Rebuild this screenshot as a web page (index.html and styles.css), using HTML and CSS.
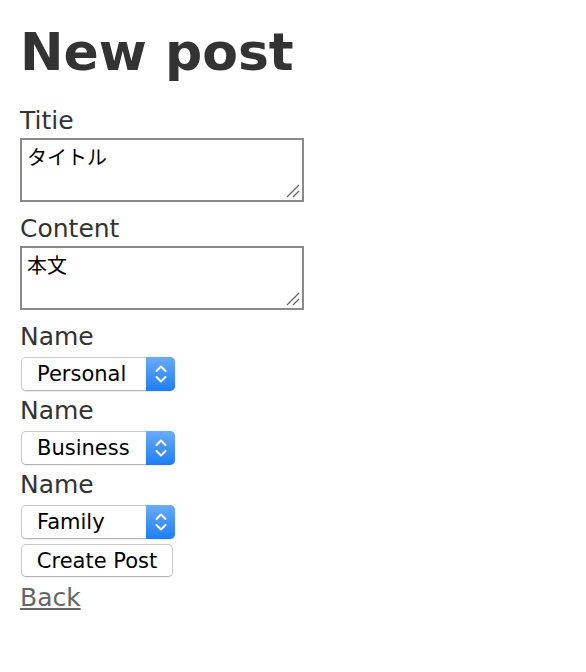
FILE: index.html
```html
<!DOCTYPE html>
<html>
<head>
  <meta charset="UTF-8">
  <title>New post</title>
  <link rel="stylesheet" href="styles.css">
</head>
<body>
  <h1>New post</h1>

  <form class="post-form">
    <div class="field">
      <label for="post_title">Titie</label>
      <span class="text-wrap">
        <textarea id="post_title" class="text-box">タイトル</textarea>
        <svg class="grip" width="14" height="14" viewBox="0 0 14 14"><path d="M1 13 L13 1 M7 13 L13 7" stroke="#666" stroke-width="1.3"/></svg>
      </span>
    </div>
    <div class="field">
      <label for="post_content">Content</label>
      <span class="text-wrap">
        <textarea id="post_content" class="text-box">本文</textarea>
        <svg class="grip" width="14" height="14" viewBox="0 0 14 14"><path d="M1 13 L13 1 M7 13 L13 7" stroke="#666" stroke-width="1.3"/></svg>
      </span>
    </div>
    <div class="field">
      <label>Name</label>
      <span class="select-wrap">
        <select class="select-box"><option>Personal</option></select>
        <span class="select-arrow"><svg width="12" height="22" viewBox="0 0 12 22"><path d="M1.5 8 L6 3.5 L10.5 8 M1.5 14 L6 18.5 L10.5 14" fill="none" stroke="#fff" stroke-width="2" stroke-linecap="round" stroke-linejoin="round"/></svg></span>
      </span>
    </div>
    <div class="field">
      <label>Name</label>
      <span class="select-wrap">
        <select class="select-box"><option>Business</option></select>
        <span class="select-arrow"><svg width="12" height="22" viewBox="0 0 12 22"><path d="M1.5 8 L6 3.5 L10.5 8 M1.5 14 L6 18.5 L10.5 14" fill="none" stroke="#fff" stroke-width="2" stroke-linecap="round" stroke-linejoin="round"/></svg></span>
      </span>
    </div>
    <div class="field">
      <label>Name</label>
      <span class="select-wrap">
        <select class="select-box"><option>Family</option></select>
        <span class="select-arrow"><svg width="12" height="22" viewBox="0 0 12 22"><path d="M1.5 8 L6 3.5 L10.5 8 M1.5 14 L6 18.5 L10.5 14" fill="none" stroke="#fff" stroke-width="2" stroke-linecap="round" stroke-linejoin="round"/></svg></span>
      </span>
    </div>
    <div class="actions">
      <button type="button" class="submit-button">Create Post</button>
    </div>
  </form>

  <a class="back-link" href="#">Back</a>
</body>
</html>
```

FILE: styles.css
```css
body {
  margin: 0;
  padding: 0 20px;
  background: #fff;
  color: #333;
  font-family: "DejaVu Sans", Verdana, sans-serif;
  font-size: 25px;
  line-height: 30px;
}
h1 {
  margin: 22px 0 24px;
  font-size: 52px;
  line-height: 60px;
  font-weight: bold;
}
.post-form {
  display: flex;
  flex-direction: column;
  align-items: flex-start;
}
.field {
  display: flex;
  flex-direction: column;
  align-items: flex-start;
}
.field label {
  display: block;
  margin-bottom: 2px;
}
.text-wrap {
  position: relative;
  display: block;
  margin: 0 0 12px;
}
.text-box {
  display: block;
  box-sizing: border-box;
  width: 284px;
  height: 64px;
  margin: 0;
  padding: 6px 5px 4px;
  border: 2px solid #8a8a8a;
  border-radius: 0;
  font-family: "DejaVu Sans", "Noto Sans CJK JP", sans-serif;
  font-size: 20px;
  line-height: 24px;
  color: #000;
  resize: none;
}
.grip {
  position: absolute;
  right: 4px;
  bottom: 4px;
}
.select-wrap {
  position: relative;
  display: block;
  margin: 3px 0 5px 1px;
  width: 154px;
  height: 34px;
}
.select-box {
  -webkit-appearance: none;
  appearance: none;
  box-sizing: border-box;
  width: 154px;
  height: 34px;
  padding: 0 0 0 15px;
  border: 1px solid #c9c9c9;
  border-bottom-color: #b4b4b4;
  border-radius: 5px;
  background: #fff;
  box-shadow: 0 1px 1px rgba(0,0,0,0.08);
  font-family: "DejaVu Sans", sans-serif;
  font-size: 21px;
  color: #000;
}
.select-arrow {
  position: absolute;
  top: 0;
  right: 0;
  width: 29px;
  height: 34px;
  display: flex;
  align-items: center;
  justify-content: center;
  border-radius: 0 5px 5px 0;
  background: linear-gradient(#6aabf9, #1d7ef6);
}
.actions {
  margin: 0 0 0 1px;
}
.submit-button {
  box-sizing: border-box;
  width: 152px;
  height: 33px;
  padding: 0;
  border: 1px solid #c9c9c9;
  border-bottom-color: #b4b4b4;
  border-radius: 5px;
  background: #fff;
  box-shadow: 0 1px 1px rgba(0,0,0,0.08);
  font-family: "DejaVu Sans", sans-serif;
  font-size: 21px;
  color: #000;
}
.back-link {
  display: inline-block;
  margin-top: 6px;
  color: #666;
  text-decoration: underline;
}
```
